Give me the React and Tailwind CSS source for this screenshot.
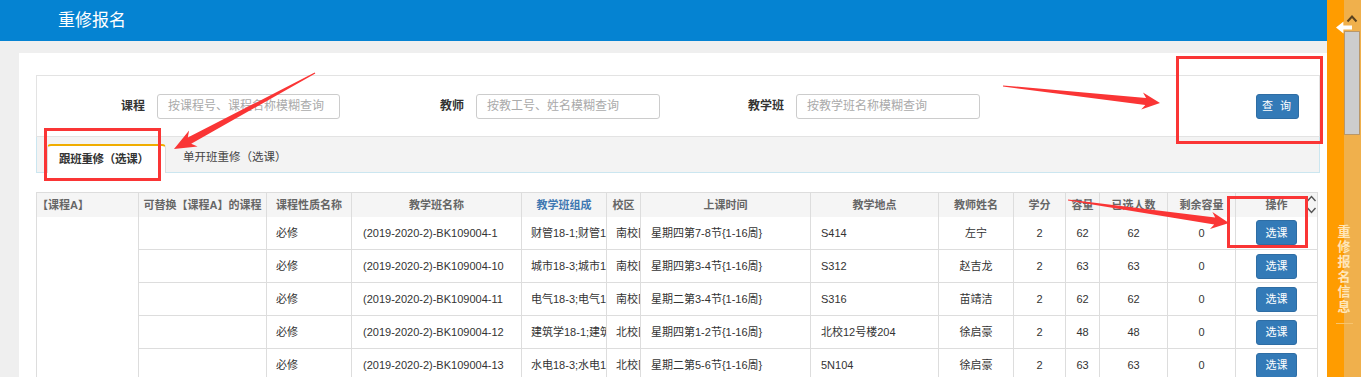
import React from 'react';

const rows = [
  ['(2019-2020-2)-BK109004-1', '财管18-1;财管18-2', '南校区', '星期四第7-8节{1-16周}', 'S414', '左宁', '2', '62', '62', '0'],
  ['(2019-2020-2)-BK109004-10', '城市18-3;城市18-4', '南校区', '星期四第3-4节{1-16周}', 'S312', '赵吉龙', '2', '63', '63', '0'],
  ['(2019-2020-2)-BK109004-11', '电气18-3;电气18-4', '南校区', '星期二第3-4节{1-16周}', 'S316', '苗靖洁', '2', '62', '62', '0'],
  ['(2019-2020-2)-BK109004-12', '建筑学18-1;建筑学18-2', '北校区', '星期四第1-2节{1-16周}', '北校12号楼204', '徐启豪', '2', '48', '48', '0'],
  ['(2019-2020-2)-BK109004-13', '水电18-3;水电18-4', '北校区', '星期二第5-6节{1-16周}', '5N104', '徐启豪', '2', '63', '63', '0'],
];

const colWidths = [102, 128, 85, 170, 85, 34, 170, 128, 75, 52, 34, 68, 68, 82];

// tapered screenshot-style arrow, tail -> tip
const arrowPoints = (x1, y1, x2, y2, hl = 20, hw = 9, nw = 3.5) => {
  const dx = x2 - x1;
  const dy = y2 - y1;
  const len = Math.hypot(dx, dy);
  const ux = dx / len;
  const uy = dy / len;
  const nx = -uy;
  const ny = ux;
  const bx = x2 - ux * hl;
  const by = y2 - uy * hl;
  const kx = x2 - ux * hl * 0.8;
  const ky = y2 - uy * hl * 0.8;
  const p = (x, y) => `${x.toFixed(1)},${y.toFixed(1)}`;
  return [
    p(x1 + nx * 0.6, y1 + ny * 0.6),
    p(kx + nx * nw, ky + ny * nw),
    p(bx + nx * hw, by + ny * hw),
    p(x2, y2),
    p(bx - nx * hw, by - ny * hw),
    p(kx - nx * nw, ky - ny * nw),
    p(x1 - nx * 0.6, y1 - ny * 0.6),
  ].join(' ');
};

const thBase = 'border-r border-[#dddddd] font-bold text-[11px] text-center whitespace-nowrap overflow-hidden px-0';
const th = `${thBase} text-[#666]`;
const td = 'border-r border-b border-[#dddddd] text-[11px] text-[#333] whitespace-nowrap overflow-hidden';

export default function App() {
  return (
    <div className="relative flex h-[377px] w-[1361px] overflow-hidden bg-[#efefef] font-['Liberation_Sans','Noto_Sans_CJK_SC',sans-serif]">
      <div className="flex min-w-0 flex-1 flex-col">
        <header className="flex h-[41px] shrink-0 items-center bg-[#0583d2] pl-[58px]">
          <div className="text-[17px] leading-[20px] text-white">重修报名</div>
        </header>

        <div className="flex-1 pl-[19px] pt-[12px]">
          <div className="h-full bg-white pl-[17px] pr-[7px] pt-[22px]">
            {/* search */}
            <div className="flex h-[62px] items-center border border-[#e3e3e3]">
              <label className="w-[108px] text-right text-[12px] font-bold text-[#333]">课程</label>
              <div className="ml-[12px] flex h-[25px] w-[183px] items-center rounded-[3px] border border-[#cccccc] pl-[10px] text-[12px] text-[#aaa]">按课程号、课程名称模糊查询</div>
              <label className="w-[124px] text-right text-[12px] font-bold text-[#333]">教师</label>
              <div className="ml-[12px] flex h-[25px] w-[184px] items-center rounded-[3px] border border-[#cccccc] pl-[10px] text-[12px] text-[#aaa]">按教工号、姓名模糊查询</div>
              <label className="w-[124px] text-right text-[12px] font-bold text-[#333]">教学班</label>
              <div className="ml-[12px] flex h-[25px] w-[184px] items-center rounded-[3px] border border-[#cccccc] pl-[10px] text-[12px] text-[#aaa]">按教学班名称模糊查询</div>
              <button className="ml-auto mr-[20px] h-[25px] w-[43px] rounded-[3px] border border-[#2e6da4] bg-[#337ab7] text-[11px] tracking-[2px] text-white">查 询</button>
            </div>

            {/* tabs */}
            <div className="flex h-[36px] items-end border-x border-b border-[#cbe6f0] bg-[#f3f3f3] pl-[10px]">
              <div className="-mb-px flex h-[29px] w-[119px] items-center rounded-t-[4px] border-x border-t-2 border-x-[#dddddd] border-t-[#f0ad00] bg-white pl-[11px] text-[11.5px] font-bold tracking-[-0.3px] text-[#333]">跟班重修（选课）</div>
              <div className="flex h-[28px] items-center pl-[17px] text-[11.5px] text-[#444]">单开班重修（选课）</div>
            </div>

            {/* table */}
            <table className="mt-[19px] w-[1281px] table-fixed border-collapse border-l border-t border-[#dddddd]">
              <colgroup>
                {colWidths.map((w, i) => (
                  <col key={i} style={{ width: w }} />
                ))}
              </colgroup>
              <thead>
                <tr className="h-[24px] bg-[#f5f5f5]">
                  <th className={`${th} text-left`}>【课程A】</th>
                  <th className={th}>可替换【课程A】的课程</th>
                  <th className={th}>课程性质名称</th>
                  <th className={th}>教学班名称</th>
                  <th className={`${thBase} text-[#3f78b2]`}>教学班组成</th>
                  <th className={th}>校区</th>
                  <th className={th}>上课时间</th>
                  <th className={th}>教学地点</th>
                  <th className={th}>教师姓名</th>
                  <th className={th}>学分</th>
                  <th className={th}>容量</th>
                  <th className={th}>已选人数</th>
                  <th className={th}>剩余容量</th>
                  <th className={`${th} relative`}>
                    操作
                    <svg className="absolute right-0 top-[1px]" width="11" height="22" viewBox="0 0 11 22" fill="none" stroke="#555" strokeWidth="1.4">
                      <path d="M1.5 7 5.5 2.5 9.5 7" />
                      <path d="M1.5 14 5.5 18.5 9.5 14" />
                    </svg>
                  </th>
                </tr>
              </thead>
              <tbody>
                {rows.map((r, i) => (
                  <tr key={i} className="h-[33px]">
                    {i === 0 && <td rowSpan={rows.length} className="border-r border-[#dddddd] bg-white" />}
                    <td className={td} />
                    <td className={`${td} pl-[9px]`}>必修</td>
                    <td className={`${td} pl-[11px]`}>{r[0]}</td>
                    <td className={`${td} pl-[9px]`}>{r[1]}</td>
                    <td className={`${td} pl-[9px]`}>{r[2]}</td>
                    <td className={`${td} pl-[10px]`}>{r[3]}</td>
                    <td className={`${td} pl-[10px]`}>{r[4]}</td>
                    <td className={`${td} text-center`}>{r[5]}</td>
                    <td className={`${td} text-center`}>{r[6]}</td>
                    <td className={`${td} text-center`}>{r[7]}</td>
                    <td className={`${td} text-center`}>{r[8]}</td>
                    <td className={`${td} text-center`}>{r[9]}</td>
                    <td className={`${td} text-center`}>
                      <button className="h-[25px] w-[41px] rounded-[3px] border border-[#2e6da4] bg-[#337ab7] text-[11px] text-white">选课</button>
                    </td>
                  </tr>
                ))}
              </tbody>
            </table>
          </div>
        </div>
      </div>

      {/* right side panel */}
      <aside className="relative w-[34px] shrink-0 bg-[linear-gradient(to_right,#ff9c00_17px,#f0b04c_17px)]">
        <svg className="absolute left-[19px] top-[14px]" width="12" height="9" viewBox="0 0 12 9" fill="none" stroke="#5a4220" strokeWidth="2">
          <path d="M1.5 7.5 6 2.5 10.5 7.5" />
        </svg>
        <div className="absolute right-[1px] top-[31px] h-[104px] w-[16px] border border-[#b8976a] bg-[#cdcdcd]" />
        <svg className="absolute left-[9px] top-[21px]" width="17" height="13" viewBox="0 0 17 13" fill="#fff">
          <path d="M0 6.5 7.5 0.5 7.5 4.5 16 4.5 16 8.5 7.5 8.5 7.5 12.5Z" />
        </svg>
        <div className="flex flex-col items-center pt-[224px] text-[13px] font-bold leading-[15px] text-[#ffe6b8]">
          {'重修报名信息'.split('').map((c) => (
            <span key={c}>{c}</span>
          ))}
          <div className="mt-[9px] h-px w-[17px] bg-[#f7c46e]" />
        </div>
      </aside>

      {/* red annotations */}
      <svg className="pointer-events-none absolute left-0 top-0" width="1361" height="377" viewBox="0 0 1361 377">
        <g fill="none" stroke="#fa3535" strokeWidth="3">
          <rect x="45.5" y="129.5" width="114" height="50" />
          <rect x="1177.5" y="57.5" width="144" height="85" />
          <rect x="1228.5" y="197.5" width="78" height="49" />
        </g>
        <g fill="#fa3535">
          <polygon points={arrowPoints(315, 73, 174, 149, 22, 9, 3.5)} />
          <polygon points={arrowPoints(1003, 86, 1160, 103, 18, 8.5, 3.5)} />
          <polygon points={arrowPoints(1068, 200, 1229, 223, 18, 8.5, 3.5)} />
        </g>
      </svg>
    </div>
  );
}
